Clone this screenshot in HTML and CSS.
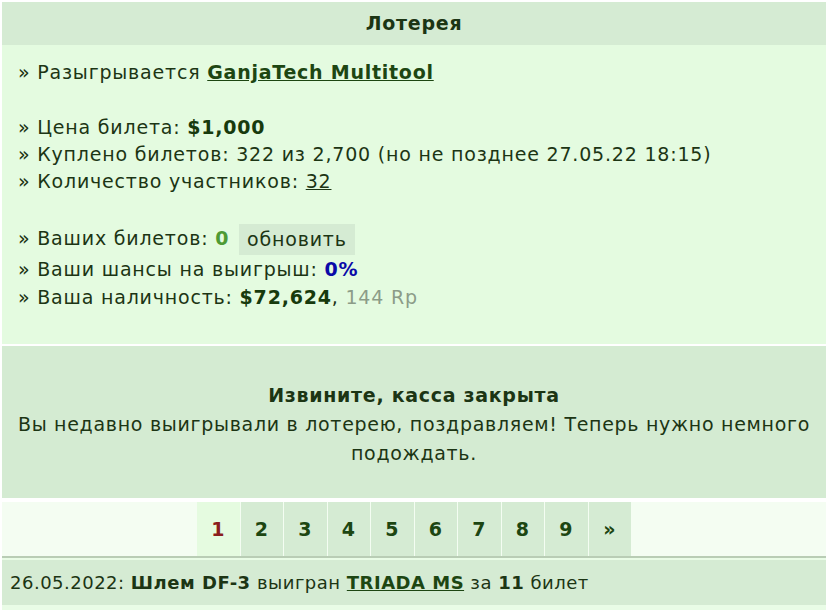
FILE: index.html
```html
<!DOCTYPE html>
<html lang="ru">
<head>
    <meta charset="UTF-8">
    <meta name="viewport" content="width=device-width, initial-scale=1.0">
    <title>Лотерея</title>
    <link rel="stylesheet" href="styles.css">
</head>
<body>
    <div class="lottery">
        <div class="lottery-title">Лотерея</div>

        <div class="lottery-info">
            <div class="line">» Разыгрывается <a href="#" class="item-link">GanjaTech Multitool</a></div>
            <div class="spacer"></div>
            <div class="line">» Цена билета: <b>$1,000</b></div>
            <div class="line">» Куплено билетов: 322 из 2,700 (но не позднее 27.05.22 18:15)</div>
            <div class="line">» Количество участников: <a href="#" class="plain-link">32</a></div>
            <div class="spacer spacer-wide"></div>
            <div class="line line-tall">» Ваших билетов: <b class="my-tickets">0</b> <button class="refresh">обновить</button></div>
            <div class="line line-loose">» Ваши шансы на выигрыш: <b class="chance">0%</b></div>
            <div class="line line-loose">» Ваша наличность: <b>$72,624</b>, <span class="muted">144 Rp</span></div>
        </div>

        <div class="closed">
            <div class="closed-title">Извините, касса закрыта</div>
            <div>Вы недавно выигрывали в лотерею, поздравляем! Теперь нужно немного подождать.</div>
        </div>

        <div class="pager">
            <span class="page current">1</span>
            <a href="#" class="page">2</a>
            <a href="#" class="page">3</a>
            <a href="#" class="page">4</a>
            <a href="#" class="page">5</a>
            <a href="#" class="page">6</a>
            <a href="#" class="page">7</a>
            <a href="#" class="page">8</a>
            <a href="#" class="page">9</a>
            <a href="#" class="page">»</a>
        </div>

        <div class="history">
            <div class="history-row">26.05.2022: <b>Шлем DF-3</b> выигран <a href="#" class="item-link">TRIADA MS</a> за <b>11</b> билет</div>
        </div>
    </div>
</body>
</html>
```

FILE: styles.css
```css
body, html {
    margin: 0;
    padding: 0;
    background-color: #ffffff;
    font-family: "DejaVu Sans", Verdana, sans-serif;
    font-size: 19px;
    letter-spacing: 0.8px;
    color: #1c3514;
}
.lottery {
    padding: 2px 2px 0 2px;
}
.lottery-title {
    background-color: #d5ebd3;
    text-align: center;
    font-weight: bold;
    letter-spacing: 0.75px;
    height: 43px;
    line-height: 43px;
}
.lottery-info {
    background-color: #e4fbe0;
    padding: 14px 16px 33px;
    line-height: 27px;
}
.spacer {
    height: 28px;
}
.spacer-wide {
    height: 29px;
}
.line-tall {
    height: 31px;
    line-height: 29px;
}
.line-loose {
    line-height: 28px;
}
.line b {
    color: #173a0d;
}
.item-link {
    color: #1d4612;
    font-weight: bold;
    letter-spacing: 0.75px;
    text-decoration: underline;
}
.plain-link {
    color: #1c3514;
    text-decoration: underline;
}
.my-tickets {
    color: #4e9a34 !important;
}
.chance {
    color: #0a0aa8 !important;
}
.muted {
    color: #8c9c88;
}
.refresh {
    font: inherit;
    letter-spacing: inherit;
    color: #1c3514;
    background-color: #d5ebd3;
    border: none;
    padding: 0 8px;
    height: 31px;
    margin: 0 0 0 3px;
    vertical-align: middle;
}
.closed {
    margin-top: 2px;
    background-color: #d4ebd2;
    text-align: center;
    padding: 35px 14px 30px;
    line-height: 29px;
    letter-spacing: 0.7px;
}
.closed-title {
    font-weight: bold;
}
.pager {
    margin-top: 4px;
    background-color: #f4fdf2;
    display: flex;
    justify-content: center;
    gap: 1px;
    border-bottom: 2px solid #b9cdb5;
}
.page {
    width: 42.5px;
    height: 54px;
    line-height: 54px;
    text-align: center;
    font-weight: bold;
    color: #1d4612;
    background-color: #d5ebd3;
    text-decoration: none;
}
.page.current {
    color: #8b1e1e;
    background-color: #e5fbe0;
}
.history {
    background-color: #e9fce6;
    padding: 2px 0 6px;
}
.history-row {
    background-color: #d5ebd3;
    height: 45px;
    line-height: 45px;
    padding-left: 8px;
    font-size: 18px;
    letter-spacing: 0.5px;
}
.history-row .item-link {
    letter-spacing: 0.5px;
}
```
